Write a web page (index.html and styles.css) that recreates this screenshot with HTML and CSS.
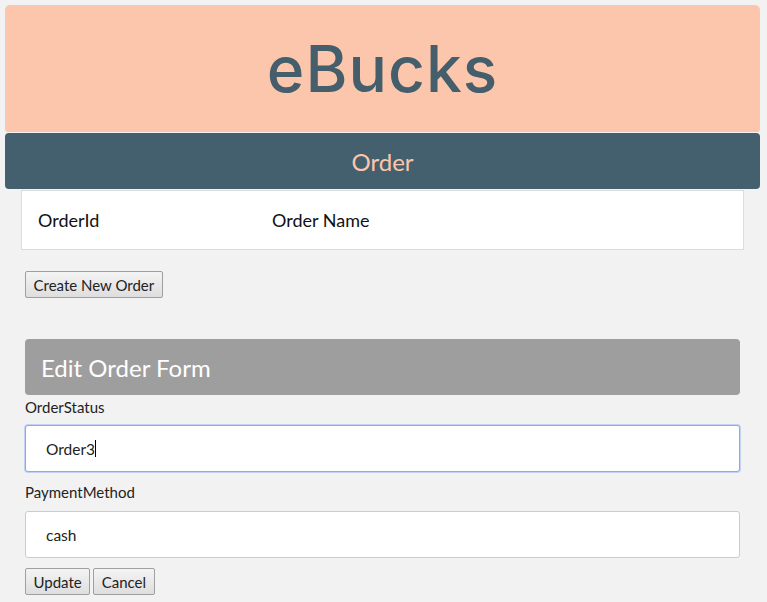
FILE: index.html
```html
<!DOCTYPE html>
<html lang="en">
<head>
    <meta charset="UTF-8">
    <title>eBucks</title>
    <link rel="stylesheet" href="styles.css">
</head>
<body>
    <div class="brand">eBucks</div>
    <div class="section-bar">Order</div>

    <div class="order-table">
        <span class="col col-id">OrderId</span>
        <span class="col col-name">Order Name</span>
    </div>

    <div class="actions">
        <button class="btn">Create New Order</button>
    </div>

    <form class="edit-form">
        <div class="form-title">Edit Order Form</div>
        <label class="field-label" for="order_status">OrderStatus</label>
        <div class="field field-focus">Order3<span class="caret"></span></div>
        <label class="field-label" for="payment_method">PaymentMethod</label>
        <div class="field">cash</div>
        <div class="form-buttons">
            <button type="button" class="btn">Update</button>
            <button type="button" class="btn">Cancel</button>
        </div>
    </form>
</body>
</html>
```

FILE: styles.css
```css
body {
    margin: 5px 7px 5px 5px;
    background: #f2f2f2;
    font-family: Lato, "Liberation Sans", sans-serif;
    color: #222;
}

.brand {
    display: flex;
    justify-content: center;
    align-items: center;
    height: 127px;
    background: #fcc6ac;
    color: #445e6c;
    border-radius: 5px 5px 3px 3px;
    font-family: Inter, "DejaVu Sans", sans-serif;
    font-size: 64px;
    font-weight: 500;
    letter-spacing: 1px;
}

.section-bar {
    display: flex;
    justify-content: center;
    align-items: center;
    height: 56px;
    margin-top: 1px;
    background: #445f6d;
    color: #fcc6ac;
    border-radius: 4px;
    font-size: 24px;
}

.order-table {
    display: flex;
    align-items: center;
    height: 58px;
    margin: 1px 16px 0;
    padding: 0 16px;
    background: #fff;
    border: 1px solid #dcdcdc;
    font-size: 18px;
    color: #111;
}
.col-id {
    width: 234px;
}

.actions {
    margin: 21px 20px 0;
}

.btn {
    font-family: Lato, "Liberation Sans", sans-serif;
    font-size: 15px;
    color: #222;
    height: 27px;
    padding: 0 7.5px;
    background: linear-gradient(#f4f4f4, #dedede);
    border: 1px solid #9f9f9f;
    border-radius: 2px;
}

.edit-form {
    margin: 41px 20px 0;
}
.form-title {
    display: flex;
    align-items: center;
    height: 56px;
    padding: 0 16px;
    background: #9e9e9e;
    color: #fff;
    border-radius: 4px;
    font-size: 24px;
}
.field-label {
    display: block;
    margin: 3px 0 9px;
    font-size: 15px;
    line-height: 18px;
}
.field {
    display: flex;
    align-items: center;
    height: 45px;
    margin-bottom: 11px;
    padding: 0 20px;
    background: #fff;
    border: 1px solid #cccccc;
    border-radius: 3px;
    font-size: 15.5px;
}
.field + .field-label {
    margin-bottom: 10px;
}
.field-focus {
    border-color: #8ea9ea;
    box-shadow: 0 0 0 1px #c3d2f3;
}
.caret {
    display: inline-block;
    width: 1px;
    height: 17px;
    background: #000;
}
.form-buttons {
    display: flex;
    gap: 3px;
    margin-top: -1px;
}
```
